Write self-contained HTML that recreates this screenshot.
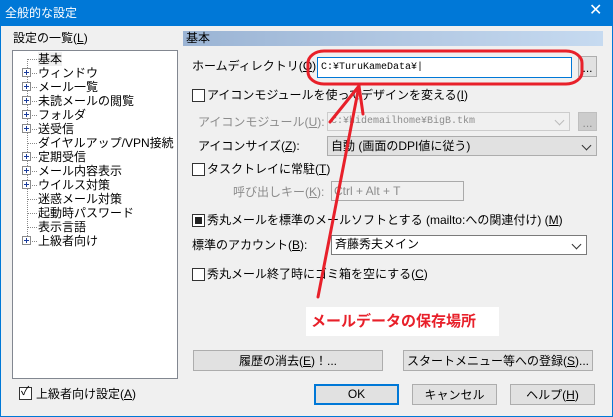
<!DOCTYPE html>
<html><head><meta charset="utf-8"><style>
*{margin:0;padding:0;box-sizing:border-box}
body{width:613px;height:417px;overflow:hidden;background:#f0f0f0;font-family:"Liberation Sans","Noto Sans CJK JP",sans-serif;font-size:12px;color:#000;position:relative}
.a{position:absolute;white-space:nowrap;line-height:14px}
.g{color:#8c8c8c}
.cb{position:absolute;width:13px;height:13px;border:1px solid #333;background:#fff}
.in{position:absolute;border:1px solid #7a7a7a;background:#fff}
.btn{position:absolute;background:#e1e1e1;border:1px solid #adadad;text-align:center;line-height:20px}
.dd{position:absolute;background:#e1e1e1;border:1px solid #adadad}
.chev{position:absolute;right:6px;top:5px;width:7px;height:7px;border-right:1px solid #333;border-bottom:1px solid #333;transform:rotate(45deg)}
.tr{position:absolute;left:38px;line-height:14px;white-space:nowrap}
.pl{position:absolute;left:22px;width:9px;height:9px;border:1px solid #8a8a8a;background:#fff}
.pl:before{content:"";position:absolute;left:1px;top:3px;width:5px;height:1px;background:#1a3c9c}
.pl:after{content:"";position:absolute;left:3px;top:1px;width:1px;height:5px;background:#1a3c9c}
.hd{position:absolute;left:27px;width:10px;border-top:1px dotted #888}
.mono{font-family:'Liberation Mono','Noto Sans CJK JP',monospace;font-size:10px}
</style></head><body>
<div style="position:absolute;left:0;top:0;width:613px;height:417px;border:1px solid #0078d7"></div>
<div style="position:absolute;left:0;top:0;width:613px;height:26px;background:#0078d7"></div>
<div class="a" style="left:5px;top:6px;color:#fff">全般的な設定</div>
<div class="a" style="left:589px;top:4px;color:#fff;font-size:16px">✕</div>

<div class="a" style="left:13px;top:31px">設定の一覧(<u>L</u>)</div>
<div style="position:absolute;left:12px;top:50px;width:166px;height:329px;background:#fff;border:1px solid #828790"></div>
<div style="position:absolute;left:27px;top:59px;height:181px;border-left:1px dotted #888"></div>
<div class="hd" style="top:59px"></div><div class="tr" style="top:52px;background:#f0f0f0">基本</div>
<div class="hd" style="top:73px"></div><div class="pl" style="top:68px"></div><div class="tr" style="top:66px">ウィンドウ</div>
<div class="hd" style="top:87px"></div><div class="pl" style="top:82px"></div><div class="tr" style="top:80px">メール一覧</div>
<div class="hd" style="top:101px"></div><div class="pl" style="top:96px"></div><div class="tr" style="top:94px">未読メールの閲覧</div>
<div class="hd" style="top:115px"></div><div class="pl" style="top:110px"></div><div class="tr" style="top:108px">フォルダ</div>
<div class="hd" style="top:129px"></div><div class="pl" style="top:124px"></div><div class="tr" style="top:122px">送受信</div>
<div class="hd" style="top:143px"></div><div class="tr" style="top:136px">ダイヤルアップ/VPN接続</div>
<div class="hd" style="top:157px"></div><div class="pl" style="top:152px"></div><div class="tr" style="top:150px">定期受信</div>
<div class="hd" style="top:171px"></div><div class="pl" style="top:166px"></div><div class="tr" style="top:164px">メール内容表示</div>
<div class="hd" style="top:185px"></div><div class="pl" style="top:180px"></div><div class="tr" style="top:178px">ウイルス対策</div>
<div class="hd" style="top:199px"></div><div class="tr" style="top:192px">迷惑メール対策</div>
<div class="hd" style="top:213px"></div><div class="tr" style="top:206px">起動時パスワード</div>
<div class="hd" style="top:227px"></div><div class="tr" style="top:220px">表示言語</div>
<div class="hd" style="top:241px"></div><div class="pl" style="top:236px"></div><div class="tr" style="top:234px">上級者向け</div>

<div class="cb" style="left:19px;top:387px;border-color:#333"></div>
<div class="a" style="left:21px;top:384px;font-size:12px">✓</div>
<div class="a" style="left:36px;top:387px">上級者向け設定(<u>A</u>)</div>

<div style="position:absolute;left:183px;top:31px;width:420px;height:15px;background:linear-gradient(90deg,#9bb4d4,#c6daf0)"></div>
<div class="a" style="left:186px;top:31px">基本</div>

<div class="a" style="left:192px;top:59px">ホームディレクトリ(<u>O</u>):</div>
<div class="in" style="left:317px;top:57px;width:255px;height:21px;border-color:#0078d7"></div>
<div class="a mono" style="left:321px;top:61px">C:¥TuruKameData¥|</div>
<div class="btn" style="left:578px;top:56px;width:19px;height:21px;line-height:22px">...</div>

<div class="cb" style="left:192px;top:89px"></div>
<div class="a" style="left:207px;top:88px">アイコンモジュールを使ってデザインを変える(<u>I</u>)</div>
<div class="a g" style="left:198px;top:115px">アイコンモジュール(<u>U</u>):</div>
<div style="position:absolute;left:327px;top:112px;width:243px;height:19px;border:1px solid #ccc;background:#f0f0f0"><div class="chev" style="border-color:#bbb;top:4px"></div></div>
<div class="a g mono" style="left:331px;top:115px">C:¥hidemailhome¥BigB.tkm</div>
<div class="btn" style="left:578px;top:112px;width:19px;height:19px;background:#ccc;border-color:#bfbfbf;color:#888;line-height:20px">...</div>

<div class="a" style="left:198px;top:139px">アイコンサイズ(<u>Z</u>):</div>
<div class="dd" style="left:327px;top:136px;width:270px;height:20px"><div class="chev"></div></div>
<div class="a" style="left:331px;top:139px">自動 (画面のDPI値に従う)</div>

<div class="cb" style="left:192px;top:163px"></div>
<div class="a" style="left:207px;top:162px">タスクトレイに常駐(<u>T</u>)</div>
<div class="a g" style="left:233px;top:185px">呼び出しキー(<u>K</u>):</div>
<div style="position:absolute;left:331px;top:181px;width:133px;height:20px;border:1px solid #aaa;background:#f0f0f0"></div>
<div class="a g" style="left:334px;top:184px">Ctrl + Alt + T</div>

<div class="cb" style="left:192px;top:214px"></div>
<div style="position:absolute;left:195px;top:217px;width:7px;height:7px;background:#222"></div>
<div class="a" style="left:207px;top:213px">秀丸メールを標準のメールソフトとする (mailto:への関連付け) (<u>M</u>)</div>
<div class="a" style="left:192px;top:238px">標準のアカウント(<u>B</u>):</div>
<div class="in" style="left:331px;top:235px;width:256px;height:20px"><div class="chev"></div></div>
<div class="a" style="left:335px;top:237px">斉藤秀夫メイン</div>

<div class="cb" style="left:192px;top:268px"></div>
<div class="a" style="left:207px;top:267px">秀丸メール終了時にゴミ箱を空にする(<u>C</u>)</div>

<div style="position:absolute;left:306px;top:307px;width:193px;height:29px;background:#fff"></div>
<div class="a" style="left:311px;top:313px;color:#e8202a;font-weight:bold;font-size:15px;line-height:18px">メールデータの保存場所</div>

<svg style="position:absolute;left:0;top:0" width="613" height="417">
<rect x="308" y="51" width="274" height="33" rx="16" ry="12" fill="none" stroke="#e8202a" stroke-width="3"/>
<g stroke="#e8202a" stroke-width="3" fill="none" stroke-linecap="round">
<line x1="318" y1="297" x2="359" y2="86"/>
<line x1="359" y1="86" x2="330" y2="122"/>
<line x1="359" y1="86" x2="363" y2="114"/>
</g></svg>

<div class="btn" style="left:193px;top:350px;width:190px;height:21px">履歴の消去(<u>E</u>)！...</div>
<div class="btn" style="left:403px;top:350px;width:190px;height:21px">スタートメニュー等への登録(<u>S</u>)...</div>
<div class="btn" style="left:314px;top:384px;width:85px;height:21px;border:2px solid #0078d7;line-height:17px">OK</div>
<div class="btn" style="left:412px;top:384px;width:85px;height:21px">キャンセル</div>
<div class="btn" style="left:510px;top:384px;width:85px;height:21px">ヘルプ(<u>H</u>)</div>
</body></html>
